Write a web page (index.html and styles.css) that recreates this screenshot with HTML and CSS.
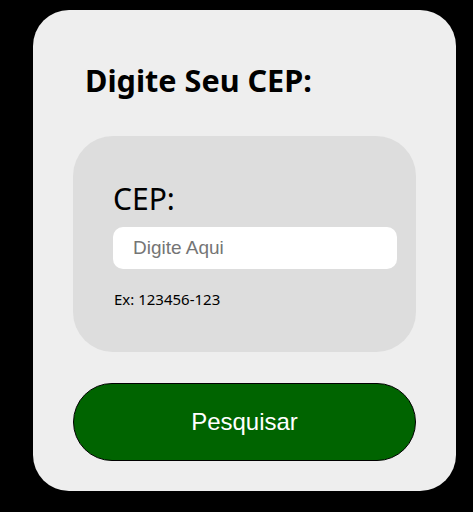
FILE: index.html
```html
<!DOCTYPE html>
<html lang="pt-BR">
<head>
<meta charset="utf-8">
<title>CEP</title>
<link rel="stylesheet" href="styles.css">
</head>
<body>
<main class="card">
  <h1 class="title">Digite Seu CEP:</h1>
  <section class="box">
    <label class="label" for="cep">CEP:</label>
    <input class="input" id="cep" type="text" placeholder="Digite Aqui">
    <p class="hint">Ex: 123456-123</p>
  </section>
  <button class="btn" type="button">Pesquisar</button>
</main>
</body>
</html>
```
FILE: styles.css
```css
html, body {
  margin: 0;
  padding: 0;
  background: #000;
}
body {
  padding: 10px 0 0 33px;
  font-family: "Noto Sans", "Open Sans", sans-serif;
}
.card {
  box-sizing: border-box;
  width: 423px;
  height: 481px;
  background: #eeeeee;
  border-radius: 36px;
  padding: 0 40px;
  display: flex;
  flex-direction: column;
}
.title {
  margin: 0;
  padding: 49px 0 0 12px;
  height: 91px;
  box-sizing: border-box;
  font-size: 30.6px;
  line-height: 42px;
  font-weight: 700;
  color: #000;
}
.box {
  margin-top: 35px;
  box-sizing: border-box;
  height: 216px;
  background: #dddddd;
  border-radius: 40px;
  padding: 43px 19px 0 40px;
  display: flex;
  flex-direction: column;
}
.label {
  font-size: 30px;
  line-height: 40px;
  height: 48px;
  color: #000;
}
.input {
  box-sizing: border-box;
  width: 284px;
  height: 42px;
  border: none;
  border-radius: 10px;
  background: #fff;
  padding: 0 20px;
  font-family: "Liberation Sans", Arial, sans-serif;
  font-size: 19px;
  color: #000;
  outline: none;
}
.input::placeholder {
  color: #757575;
}
.hint {
  margin: 20px 0 0 1px;
  font-size: 15px;
  line-height: 20px;
  color: #000;
}
.btn {
  margin-top: 31px;
  box-sizing: border-box;
  width: 343px;
  height: 78px;
  background: #006400;
  border: 1px solid #000;
  border-radius: 40px;
  color: #fff;
  font-family: "Liberation Sans", Arial, sans-serif;
  font-size: 24px;
  cursor: pointer;
}
```
